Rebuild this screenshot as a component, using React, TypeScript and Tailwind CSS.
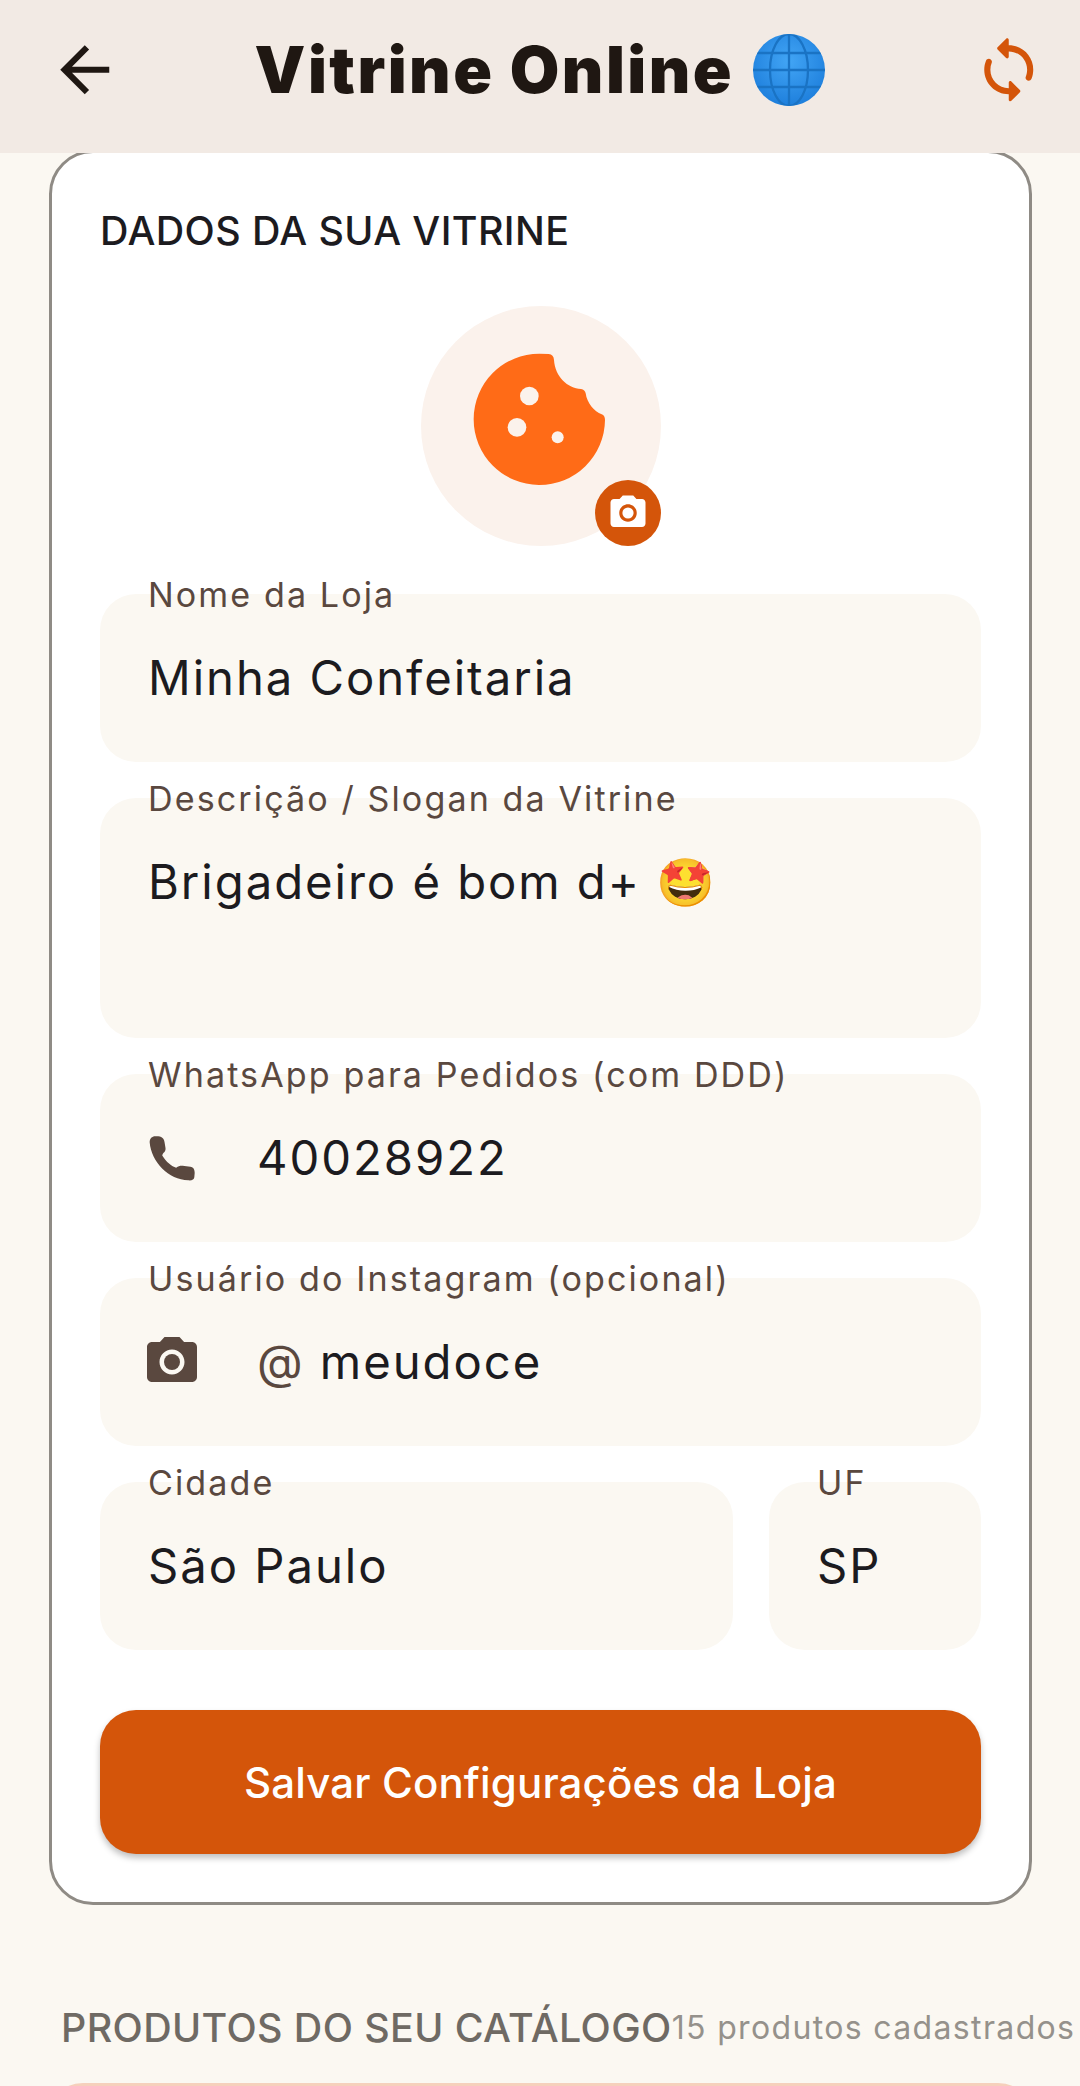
import { MdArrowBack, MdCameraAlt } from "react-icons/md";
import type { ReactNode } from "react";

const font = "font-['Inter','Noto_Sans',sans-serif]";

function GlobeEmoji() {
  return (
    <svg viewBox="0 0 72 72" className="h-[72px] w-[72px] shrink-0">
      <defs>
        <radialGradient id="globeFill" cx="50%" cy="38%" r="62%">
          <stop offset="0%" stopColor="#42a5f5" />
          <stop offset="100%" stopColor="#1e7fdc" />
        </radialGradient>
        <clipPath id="globeClip">
          <circle cx="36" cy="36" r="36" />
        </clipPath>
      </defs>
      <circle cx="36" cy="36" r="36" fill="url(#globeFill)" />
      <g clipPath="url(#globeClip)" fill="none" stroke="#1a73c4" strokeWidth="2.3">
        <ellipse cx="36" cy="36" rx="19" ry="36" />
        <path d="M36 0V72M0 19H72M0 36H72M0 53H72" />
      </g>
    </svg>
  );
}

function SyncIcon() {
  return (
    <svg viewBox="0 0 24 24" fill="currentColor" className="h-[73.5px] w-[73.5px] text-[#d4550a]">
      <path d="M12 4V2.21c0-.45-.54-.67-.85-.35l-2.8 2.79c-.2.2-.2.51 0 .71l2.79 2.79c.32.31.86.09.86-.36V6c3.31 0 6 2.69 6 6 0 .79-.15 1.56-.44 2.25-.15.36-.04.77.23 1.04.51.51 1.37.33 1.64-.34.37-.91.57-1.91.57-2.95 0-4.42-3.58-8-8-8zm0 14c-3.31 0-6-2.69-6-6 0-.79.15-1.56.44-2.25.15-.36.04-.77-.23-1.04-.51-.51-1.37-.33-1.64.34C4.2 9.96 4 10.96 4 12c0 4.42 3.58 8 8 8v1.79c0 .45.54.67.85.35l2.79-2.79c.2-.2.2-.51 0-.71l-2.79-2.79c-.31-.31-.85-.09-.85.36V18z" />
    </svg>
  );
}

function CookieIcon() {
  return (
    <svg viewBox="120 78 720 720" className="h-[240px] w-[240px]">
      <path
        d="M475 221 L503 222 Q518 224 519 240 C522 290 560 325 600 327 Q612 329 614 340 C618 370 640 395 662 403 Q672 407 672 420 A197 197 0 1 1 475 221 Z"
        fill="#ff6b17"
      />
      <circle cx="445" cy="348" r="28" fill="#fbf2ec" />
      <circle cx="408" cy="442" r="28" fill="#fbf2ec" />
      <circle cx="530" cy="472" r="18" fill="#fbf2ec" />
    </svg>
  );
}

function PhoneIcon() {
  return (
    <svg viewBox="200 250 145 145" className="h-[48px] w-[48px] text-[#5a483f]" fill="currentColor">
      <path d="M222 257 C240 256 248 262 250 275 L253 293 C254 305 245 305 243 315 C255 335 272 348 285 352 C295 345 300 345 310 347 L328 349 C338 350 341 358 341 368 L340 380 C340 388 332 391 322 390 C262 388 210 335 205 275 C205 264 212 257 222 257 Z" />
    </svg>
  );
}

function Field({
  label,
  value,
  icon,
  className = "h-[168px]",
  top = false,
}: {
  label: string;
  value: ReactNode;
  icon?: ReactNode;
  className?: string;
  top?: boolean;
}) {
  return (
    <div className={`relative rounded-[36px] bg-[#fbf8f2] ${className}`}>
      <span className="absolute left-[48px] top-[-20px] text-[34.1px] leading-[42px] tracking-[2.1px] text-[#5a483f] whitespace-nowrap">
        {label}
      </span>
      <div className={`flex h-full px-[48px] ${top ? "items-start pt-[55px]" : "items-center"}`}>
        {icon && <div className="flex w-[109px] shrink-0 items-center">{icon}</div>}
        <div className="text-[47.25px] leading-[58px] tracking-[1.95px] text-[#1c1b1f] whitespace-nowrap">{value}</div>
      </div>
    </div>
  );
}

export default function App() {
  return (
    <div className={`h-[2086px] w-[1080px] overflow-hidden bg-[#fbf8f2] ${font}`}>
      {/* Top bar */}
      <header className="relative z-10 flex h-[153px] items-start bg-[#f2eae4] pl-[48px] pr-[35px] pt-[33px]">
        <MdArrowBack className="shrink-0 text-[73.5px] text-[#1f1712]" />
        <h1 className="ml-[133px] flex flex-1 items-center gap-[19px] text-[64px] font-black leading-[73.5px] tracking-[2.5px] text-[#1f1712]">
          Vitrine Online <GlobeEmoji />
        </h1>
        <SyncIcon />
      </header>

      <main className="pl-[49px] pr-[48px]">
        {/* Store card */}
        <section className="-mt-[3px] h-[1755px] rounded-[44px] border-[3px] border-[#8f8b85] bg-white pl-[48px] pr-[48px] pt-[56px]">
          <h2 className="text-[39.4px] font-medium leading-[44px] tracking-[0.4px] text-[#1c1b1f]">DADOS DA SUA VITRINE</h2>

          <div className="relative mx-auto mt-[53px] h-[240px] w-[240px] rounded-full bg-[#fbf2ec]">
            <CookieIcon />
            <div className="absolute bottom-0 right-0 flex h-[66px] w-[66px] items-center justify-center rounded-full bg-[#d4550a]">
              <MdCameraAlt className="text-[42px] text-white" />
            </div>
          </div>

          <div className="mt-[48px] flex flex-col gap-[36px]">
            <Field label="Nome da Loja" value="Minha Confeitaria" />
            <Field label="Descrição / Slogan da Vitrine" value="Brigadeiro é bom d+ 🤩" className="h-[240px]" top />
            <Field label="WhatsApp para Pedidos (com DDD)" value="40028922" icon={<PhoneIcon />} />
            <Field
              label="Usuário do Instagram (opcional)"
              value={
                <>
                  <span className="text-[#5a483f]">@</span> meudoce
                </>
              }
              icon={<MdCameraAlt className="-ml-[6px] text-[60px] text-[#5a483f]" />}
            />
            <div className="flex gap-[36px]">
              <Field label="Cidade" value="São Paulo" className="h-[168px] flex-1" />
              <Field label="UF" value="SP" className="h-[168px] w-[212px]" />
            </div>
          </div>

          <button className="mt-[60px] h-[144px] w-full rounded-[36px] bg-[#d4550a] text-[42px] font-medium tracking-[0.15px] text-white shadow-[0_4px_6px_rgba(0,0,0,0.25)]">
            Salvar Configurações da Loja
          </button>
        </section>

        {/* Catalog heading */}
        <div className="-mx-[49px] mt-[100px] flex items-center pl-[61px]">
          <h3 className="text-[39.4px] font-medium leading-[46px] tracking-[0.4px] text-[#6f6a64] whitespace-nowrap">
            PRODUTOS DO SEU CATÁLOGO
          </h3>
          <span className="text-[32px] leading-[46px] tracking-[1.35px] text-[#95918b] whitespace-nowrap">15 produtos cadastrados</span>
        </div>

        <div className="-mx-[2px] mt-[32px] h-[100px] rounded-[36px] border-[3px] border-[#f6d0bc] bg-[#fbf2ec]" />
      </main>
    </div>
  );
}
